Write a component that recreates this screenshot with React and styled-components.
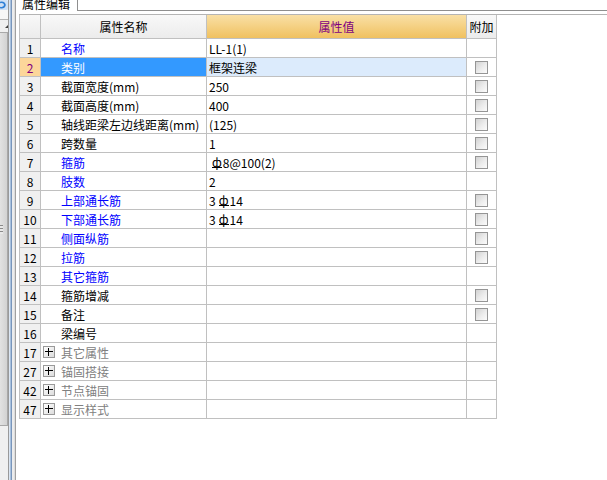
import React from 'react';
import styled, { createGlobalStyle } from 'styled-components';

const GlobalStyle = createGlobalStyle`
  html, body {
    margin: 0;
    padding: 0;
    background: #ffffff;
  }
  body {
    font-family: "Noto Sans CJK SC", "Liberation Sans", sans-serif;
    font-size: 12px;
    color: #000;
  }
`;

const rows = [
  { no: 1, name: '名称', value: 'LL-1(1)', link: true },
  { no: 2, name: '类别', value: '框架连梁', check: true, selected: true },
  { no: 3, name: '截面宽度(mm)', value: '250', check: true },
  { no: 4, name: '截面高度(mm)', value: '400', check: true },
  { no: 5, name: '轴线距梁左边线距离(mm)', value: '(125)', check: true },
  { no: 6, name: '跨数量', value: '1', check: true },
  { no: 7, name: '箍筋', value: '§8@100(2)', link: true, check: true },
  { no: 8, name: '肢数', value: '2', link: true },
  { no: 9, name: '上部通长筋', value: '3§14', link: true, check: true },
  { no: 10, name: '下部通长筋', value: '3§14', link: true, check: true },
  { no: 11, name: '侧面纵筋', value: '', link: true, check: true },
  { no: 12, name: '拉筋', value: '', link: true, check: true },
  { no: 13, name: '其它箍筋', value: '', link: true },
  { no: 14, name: '箍筋增减', value: '', check: true },
  { no: 15, name: '备注', value: '', check: true },
  { no: 16, name: '梁编号', value: '' },
  { no: 17, name: '其它属性', group: true },
  { no: 27, name: '锚固搭接', group: true },
  { no: 42, name: '节点锚固', group: true },
  { no: 47, name: '显示样式', group: true },
];

const Page = styled.div`
  display: flex;
  width: 607px;
  height: 480px;
  overflow: hidden;
  background: #fff;
`;

// left docked panel strip (cut off)
const SidePanel = styled.div`
  width: 8px;
  display: flex;
  flex-direction: column;
  background: #f0f0f0;
`;

const SideIcon = styled.div`
  height: 10px;
  background: #e4eef9;
  display: flex;
`;

const SideHead = styled.div`
  height: 9px;
  background: #f7f7f7;
  border-bottom: 1px solid #b5b5b5;
`;

const SideArrowRow = styled.div`
  height: 12px;
  display: flex;
  justify-content: flex-end;
  align-items: center;
`;

const SideArrow = styled.div`
  width: 0;
  height: 0;
  border-left: 3px solid transparent;
  border-bottom: 3px solid #404040;
`;

const SideThumb = styled.div`
  height: 392px;
  background: linear-gradient(to right, #e2e2e2, #d2d2d2);
  border: 1px solid #a8a8a8;
  border-left: none;
  display: flex;
  align-items: center;
`;

const Grip = styled.div`
  width: 3px;
  height: 9px;
  background: repeating-linear-gradient(to bottom, #8a8a8a 0 1px, #e8e8e8 1px 3px);
`;

const Splitter = styled.div`
  width: 7px;
  background: linear-gradient(
    to right,
    #9a9a9a 0 1px,
    #dbe6f3 1px 2px,
    #a9c1dd 2px 3px,
    #7895bb 3px 4px,
    #ececec 4px 6px,
    #dcdcdc 6px 7px
  );
`;

const ContentPanel = styled.div`
  flex: 1;
  display: flex;
  flex-direction: column;
  border-left: 1px solid #a0a0a0;
`;

const TabStrip = styled.div`
  display: flex;
  height: 11px;
`;

const Tab = styled.div`
  width: 62px;
  height: 11px;
  padding-left: 6px;
  box-sizing: border-box;
  border-right: 1px solid #8f8f8f;
  overflow: hidden;
`;

const TabLabel = styled.div`
  line-height: 12px;
  margin-top: -2px;
  white-space: nowrap;
`;

const TabRest = styled.div`
  flex: 1;
  border-bottom: 1px solid #8f8f8f;
`;

const GridFrame = styled.div`
  margin-top: 3px;
  margin-left: 3px;
  border-top: 1px solid #b4b4b4;
`;

const Grid = styled.div`
  display: grid;
  grid-template-columns: 20px 165px 259px 29px;
  grid-template-rows: 23px;
  grid-auto-rows: 18px;
  gap: 1px;
  padding: 0 1px 1px 1px;
  width: max-content;
  background: #c0c0c0;
`;

const HeadCell = styled.div`
  display: flex;
  align-items: center;
  justify-content: center;
  white-space: nowrap;
  background: ${p => (p.$accent
    ? 'linear-gradient(to bottom, #f9e0a6, #f0c160)'
    : 'linear-gradient(to bottom, #f8f8f8, #ececec)')};
  color: ${p => (p.$accent ? '#800080' : '#000')};
`;

const NumCell = styled.div`
  display: flex;
  align-items: center;
  justify-content: center;
  background: ${p => (p.$selected ? '#fcd69a' : '#f0f0f0')};
  color: ${p => (p.$selected ? '#800080' : '#000')};
`;

const NameCell = styled.div`
  display: flex;
  align-items: center;
  gap: 6px;
  padding-left: ${p => (p.$group ? '2px' : '20px')};
  white-space: nowrap;
  overflow: hidden;
  background: ${p => (p.$selected ? '#3399ff' : '#fff')};
  color: ${p => {
    if (p.$selected) return '#fff';
    if (p.$group) return '#808080';
    return p.$link ? '#0000ff' : '#000';
  }};
`;

const ValueCell = styled.div`
  display: flex;
  align-items: center;
  padding-left: 2px;
  white-space: nowrap;
  background: ${p => (p.$selected ? '#dcebfc' : '#fff')};
`;

const AddCell = styled.div`
  display: flex;
  align-items: center;
  justify-content: center;
  background: #fff;
`;

const CheckBox = styled.div`
  width: 11px;
  height: 11px;
  border: 1px solid #959595;
  background: linear-gradient(135deg, #d2d2d2 0%, #ececec 55%, #fbfbfb 100%);
`;

const PlusBox = styled.div`
  position: relative;
  width: 10px;
  height: 10px;
  flex: none;
  border: 1px solid #9a9a9a;
  background: linear-gradient(135deg, #ffffff, #dcdcdc);

  &::before,
  &::after {
    content: '';
    position: absolute;
    background: #000;
  }
  &::before {
    left: 1px;
    top: 4px;
    width: 8px;
    height: 1px;
  }
  &::after {
    left: 4px;
    top: 1px;
    width: 1px;
    height: 8px;
  }
`;

const Rebar = styled.span`
  display: inline-block;
  line-height: 11px;
  font-size: 12px;
  margin: 0 1px 0 3px;
  border-bottom: 1px solid #000;
`;

const renderValue = text =>
  text.split('§').map((part, i) => (
    <React.Fragment key={i}>
      {i > 0 && <Rebar>ф</Rebar>}
      {part}
    </React.Fragment>
  ));

export default function App() {
  return (
    <Page>
      <GlobalStyle />
      <SidePanel>
        <SideIcon>
          <svg width="8" height="10" viewBox="0 0 8 10">
            <path d="M0 0 H6 Q8 0 8 2 V8 Q8 10 6 10 H0 Z" fill="#cfe0f5" />
            <path d="M0 2.5 Q4 1.5 5 5 Q4 8.5 0 7.5" fill="none" stroke="#2f7fd6" strokeWidth="1.6" />
          </svg>
        </SideIcon>
        <SideHead />
        <SideArrowRow>
          <SideArrow />
        </SideArrowRow>
        <SideThumb>
          <Grip />
        </SideThumb>
      </SidePanel>
      <Splitter />
      <ContentPanel>
        <TabStrip>
          <Tab>
            <TabLabel>属性编辑</TabLabel>
          </Tab>
          <TabRest />
        </TabStrip>
        <GridFrame>
          <Grid>
            <HeadCell />
            <HeadCell>属性名称</HeadCell>
            <HeadCell $accent>属性值</HeadCell>
            <HeadCell>附加</HeadCell>
            {rows.map(r => (
              <React.Fragment key={r.no}>
                <NumCell $selected={r.selected}>{r.no}</NumCell>
                <NameCell $selected={r.selected} $link={r.link} $group={r.group}>
                  {r.group && <PlusBox />}
                  {r.name}
                </NameCell>
                <ValueCell $selected={r.selected}>{r.value ? renderValue(r.value) : null}</ValueCell>
                <AddCell>{r.check && <CheckBox />}</AddCell>
              </React.Fragment>
            ))}
          </Grid>
        </GridFrame>
      </ContentPanel>
    </Page>
  );
}
